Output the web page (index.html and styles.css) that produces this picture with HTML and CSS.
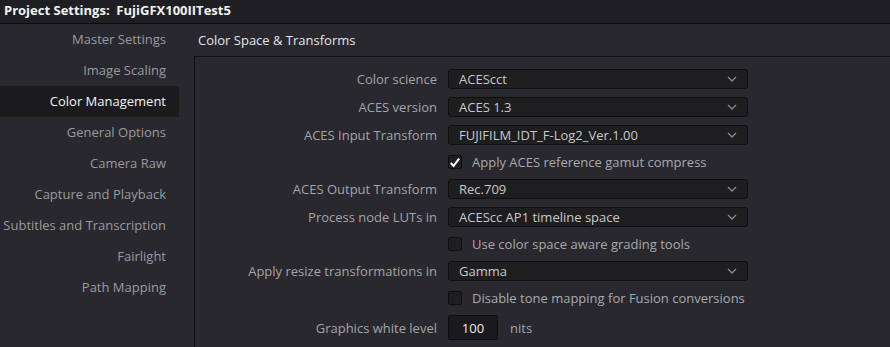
FILE: index.html
```html
<!DOCTYPE html>
<html>
<head>
<meta charset="utf-8">
<link rel="stylesheet" href="styles.css">
</head>
<body>
<div class="titlebar">Project Settings:&nbsp; FujiGFX100IITest5</div>
<div class="main">
  <nav class="sidebar">
    <div class="nav-item">Master Settings</div>
    <div class="nav-item">Image Scaling</div>
    <div class="nav-item active">Color Management</div>
    <div class="nav-item">General Options</div>
    <div class="nav-item">Camera Raw</div>
    <div class="nav-item">Capture and Playback</div>
    <div class="nav-item">Subtitles and Transcription</div>
    <div class="nav-item">Fairlight</div>
    <div class="nav-item">Path Mapping</div>
  </nav>
  <section class="content">
    <div class="section-title">Color Space &amp; Transforms</div>
    <div class="panel">
      <div class="form">
        <div class="label">Color science</div>
        <div class="select"><span>ACEScct</span><svg class="chev" width="10" height="6" viewBox="0 0 10 6"><path d="M1 1 L5 5 L9 1" fill="none" stroke="#8a8a8a" stroke-width="1.3"/></svg></div>

        <div class="label">ACES version</div>
        <div class="select"><span>ACES 1.3</span><svg class="chev" width="10" height="6" viewBox="0 0 10 6"><path d="M1 1 L5 5 L9 1" fill="none" stroke="#8a8a8a" stroke-width="1.3"/></svg></div>

        <div class="label">ACES Input Transform</div>
        <div class="select"><span>FUJIFILM_IDT_F-Log2_Ver.1.00</span><svg class="chev" width="10" height="6" viewBox="0 0 10 6"><path d="M1 1 L5 5 L9 1" fill="none" stroke="#8a8a8a" stroke-width="1.3"/></svg></div>

        <div class="label"></div>
        <div class="check-row"><span class="box checked"><svg width="13" height="13" viewBox="0 0 13 13"><path d="M2 7 L5 10.2 L11 2.2" fill="none" stroke="#ffffff" stroke-width="2.2"/></svg></span><span class="check-text">Apply ACES reference gamut compress</span></div>

        <div class="label">ACES Output Transform</div>
        <div class="select"><span>Rec.709</span><svg class="chev" width="10" height="6" viewBox="0 0 10 6"><path d="M1 1 L5 5 L9 1" fill="none" stroke="#8a8a8a" stroke-width="1.3"/></svg></div>

        <div class="label">Process node LUTs in</div>
        <div class="select"><span>ACEScc AP1 timeline space</span><svg class="chev" width="10" height="6" viewBox="0 0 10 6"><path d="M1 1 L5 5 L9 1" fill="none" stroke="#8a8a8a" stroke-width="1.3"/></svg></div>

        <div class="label"></div>
        <div class="check-row"><span class="box"></span><span class="check-text">Use color space aware grading tools</span></div>

        <div class="label">Apply resize transformations in</div>
        <div class="select"><span>Gamma</span><svg class="chev" width="10" height="6" viewBox="0 0 10 6"><path d="M1 1 L5 5 L9 1" fill="none" stroke="#8a8a8a" stroke-width="1.3"/></svg></div>

        <div class="label"></div>
        <div class="check-row"><span class="box"></span><span class="check-text">Disable tone mapping for Fusion conversions</span></div>

        <div class="label">Graphics white level</div>
        <div class="num-row"><span class="num">100</span><span class="unit">nits</span></div>
      </div>
    </div>
  </section>
</div>
</body>
</html>
```
FILE: styles.css
```css
* { box-sizing: border-box; }
html, body {
  margin: 0;
  padding: 0;
  background: #28282e;
  font-family: "Open Sans", "Noto Sans", sans-serif;
  font-size: 13px;
  overflow: hidden;
  height: 347px;
}
.titlebar {
  height: 24px;
  background: #1f1f23;
  border-bottom: 1px solid #0c0c0e;
  color: #f2f2f2;
  font-weight: 700;
  font-size: 13px;
  line-height: 21px;
  padding-left: 4px;
  white-space: pre;
}
.main {
  display: flex;
  height: 323px;
}
.sidebar {
  width: 194px;
  flex: none;
  display: flex;
  flex-direction: column;
}
.nav-item {
  width: 179px;
  height: 31px;
  line-height: 31px;
  text-align: right;
  padding-right: 13px;
  color: #9a9a9e;
  white-space: nowrap;
}
.nav-item.active {
  background: #1b1b1e;
  color: #f4f4f4;
}
.content {
  flex: 1;
  display: flex;
  flex-direction: column;
}
.section-title {
  height: 32px;
  line-height: 32px;
  padding-left: 4px;
  color: #e4e4e6;
}
.panel {
  flex: 1;
  border-top: 1px solid #0e0e10;
  border-left: 1px solid #0e0e10;
  padding-top: 12px;
}
.form {
  display: grid;
  grid-template-columns: 242px 300px;
  column-gap: 11px;
  row-gap: 8px;
  align-items: center;
}
.label {
  text-align: right;
  color: #a4a4a8;
  white-space: nowrap;
}
.select {
  height: 20px;
  background: #1e1e20;
  border: 1px solid #0f0f10;
  border-radius: 3px;
  display: flex;
  align-items: center;
  justify-content: space-between;
  padding: 0 10px;
  color: #c8c8ca;
}
.chev { display: block; }
.check-row {
  height: 18px;
  display: flex;
  align-items: center;
  gap: 10px;
}
.box {
  width: 14px;
  height: 14px;
  background: #1e1e20;
  border: 1px solid #0f0f10;
  border-radius: 2px;
  display: flex;
  align-items: center;
  justify-content: center;
}
.check-text {
  color: #a8a8ac;
  white-space: nowrap;
}
.num-row {
  display: flex;
  align-items: center;
  gap: 12px;
}
.num {
  width: 50px;
  height: 25px;
  background: #1a1a1c;
  border: 1px solid #0f0f10;
  border-radius: 2px;
  display: flex;
  align-items: center;
  justify-content: center;
  color: #ececee;
}
.unit {
  color: #a4a4a8;
}
```
